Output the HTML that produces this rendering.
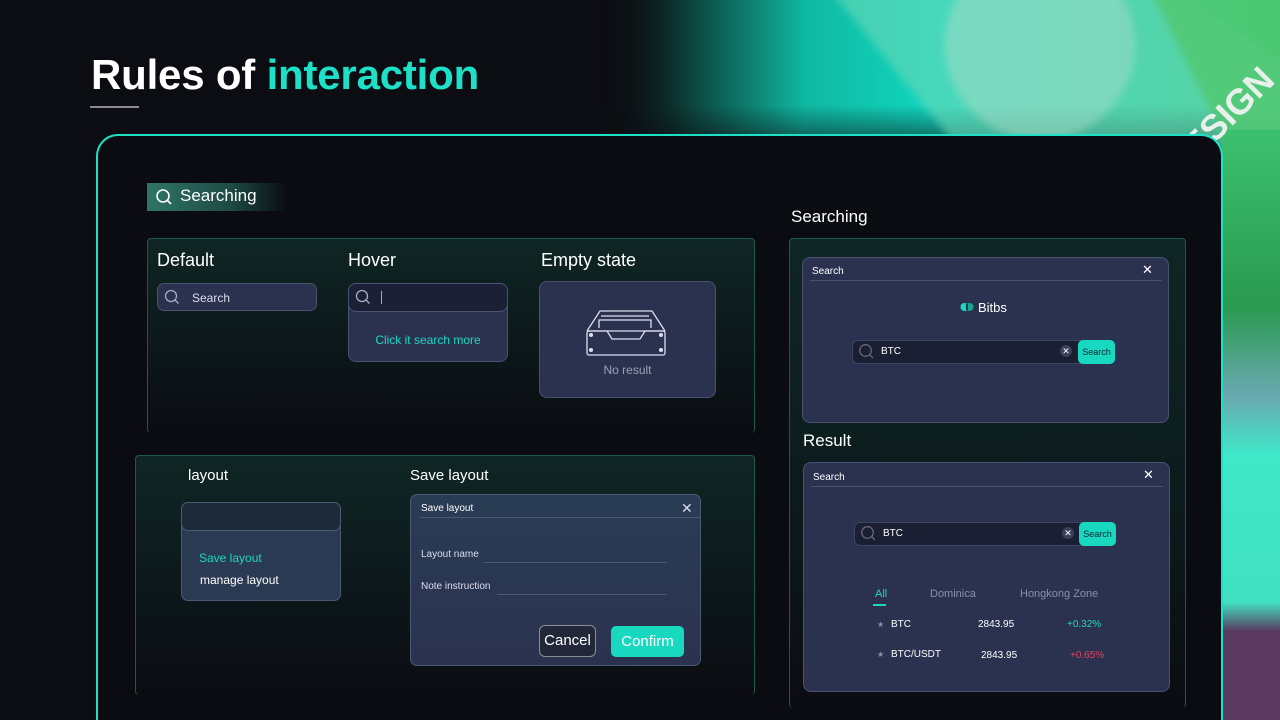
<!DOCTYPE html>
<html style="width:1280px;height:720px;overflow:hidden"><head><meta charset="utf-8"><style>
*{margin:0;padding:0;box-sizing:border-box}
body{width:1280px;height:720px;overflow:hidden;background:#0c0d12;font-family:"Liberation Sans",sans-serif;color:#fff;position:relative}
.a{position:absolute}
.t{white-space:nowrap}
.card{background:#2b3250;border:1px solid #4a5272;border-radius:8px}
.inp{background:#1a1f33;border:1px solid #3c4460;border-radius:6px}
</style></head><body>
<svg class="a" style="left:0;top:0" width="1280" height="720">
<defs>
<linearGradient id="g2" x1="0" y1="0" x2="1" y2="0"><stop offset="0" stop-color="#0c0d12" stop-opacity="0"/><stop offset="0.12" stop-color="#0c3a34"/><stop offset="0.3" stop-color="#0fb8a2"/><stop offset="0.5" stop-color="#12d8c0"/><stop offset="1" stop-color="#40c880"/></linearGradient>
<linearGradient id="gv" x1="0" y1="0" x2="0" y2="1"><stop offset="0.7" stop-color="#fff"/><stop offset="1" stop-color="#fff" stop-opacity="0.3"/></linearGradient>
<mask id="m"><rect x="600" y="0" width="680" height="150" fill="url(#gv)"/></mask>
<linearGradient id="g3" x1="0" y1="0" x2="0" y2="1"><stop offset="0" stop-color="#3cc070"/><stop offset="0.3" stop-color="#2a9a50"/><stop offset="0.45" stop-color="#6aa8b0"/><stop offset="0.55" stop-color="#40e8c8"/><stop offset="0.8" stop-color="#40e0c0"/><stop offset="0.85" stop-color="#5a3a60"/><stop offset="1" stop-color="#5a3a5e"/></linearGradient>
<filter id="b2"><feGaussianBlur stdDeviation="4"/></filter>
</defs>
<rect x="600" y="0" width="680" height="150" fill="url(#g2)" mask="url(#m)"/>
<g filter="url(#b2)">
<polygon points="830,-10 1180,-10 1290,70 1290,150 960,150" fill="#6ad8b8" opacity="0.6"/>
<circle cx="1040" cy="45" r="95" fill="#a8dcc8" opacity="0.5"/>
<polygon points="1150,-10 1290,-10 1290,150 1230,150" fill="#50c870" opacity="0.8"/>
</g>
<rect x="1222" y="130" width="58" height="590" fill="url(#g3)"/>
<text x="1150" y="150" font-family="Liberation Sans" font-weight="bold" font-size="36" fill="#e8f0ec" transform="rotate(-45 1200 130)">DESIGN</text>
</svg>
<div class="a t" style="left:91px;top:51px;font-size:42px;font-weight:bold;letter-spacing:-0.2px">Rules of <span style="color:#1de0c8">interaction</span></div>
<div class="a" style="left:90px;top:106px;width:49px;height:2px;background:#8a8a90"></div>
<div class="a" style="left:96px;top:134px;width:1127px;height:586px;border:2px solid #1de0c4;border-bottom:none;border-radius:22px 22px 0 0;background:#0b0c11"></div>

<div class="a" style="left:147px;top:183px;width:140px;height:28px;background:linear-gradient(90deg,#2f7468,#1e4a44 60%,rgba(12,13,18,0))"></div>
<svg class="a" style="left:155px;top:188px" width="18" height="18"><circle cx="8" cy="8" r="6" stroke="#fff" stroke-width="1.6" fill="none"/><line x1="12.5" y1="12.5" x2="16" y2="16" stroke="#fff" stroke-width="1.6"/></svg>
<div class="a t" style="left:180px;top:186px;font-size:17px">Searching</div>

<div class="a" style="left:147px;top:238px;width:608px;height:195px;border:1px solid #1e5a4c;border-bottom:none;border-radius:4px;background:linear-gradient(180deg,#0f2624,#0c1418 70%,#0b0c11)"></div>
<div class="a t" style="left:157px;top:250px;font-size:18px">Default</div>
<div class="a t" style="left:348px;top:250px;font-size:18px">Hover</div>
<div class="a t" style="left:541px;top:250px;font-size:18px">Empty state</div>
<div class="a card" style="left:157px;top:283px;width:160px;height:28px;border-radius:7px"></div>
<svg class="a" style="left:164px;top:289px" width="16" height="16"><circle cx="7" cy="7" r="5.5" stroke="#aab" stroke-width="1.3" fill="none"/><line x1="11" y1="11" x2="14.5" y2="14.5" stroke="#aab" stroke-width="1.3"/></svg>
<div class="a t" style="left:192px;top:291px;font-size:12px;color:#dde">Search</div>
<div class="a card" style="left:348px;top:283px;width:160px;height:79px"></div>
<div class="a" style="left:348px;top:283px;width:160px;height:29px;background:#1c2036;border:1px solid #4a5272;border-radius:8px"></div>
<svg class="a" style="left:355px;top:289px" width="16" height="16"><circle cx="7" cy="7" r="5.5" stroke="#aab" stroke-width="1.3" fill="none"/><line x1="11" y1="11" x2="14.5" y2="14.5" stroke="#aab" stroke-width="1.3"/></svg>
<div class="a" style="left:381px;top:291px;width:1px;height:13px;background:#aab"></div>
<div class="a t" style="left:348px;top:333px;width:160px;text-align:center;font-size:12px;color:#1dd8c0">Click it search more</div>
<div class="a card" style="left:539px;top:281px;width:177px;height:117px"></div>
<svg class="a" style="left:585px;top:308px" width="84" height="50" fill="none" stroke="#dde" stroke-width="1.3"><path d="M2 23 L15 3 L67 3 L80 23"/><rect x="2" y="23" width="78" height="24" rx="2"/><path d="M2 23 L22 23 L27 31 L55 31 L60 23 L80 23"/><path d="M14 20 L14 12 L66 12 L66 20 M16 8 L64 8"/><circle cx="6" cy="27" r="1.4" fill="#dde"/><circle cx="76" cy="27" r="1.4" fill="#dde"/><circle cx="6" cy="42" r="1.4" fill="#dde"/><circle cx="76" cy="42" r="1.4" fill="#dde"/></svg>
<div class="a t" style="left:539px;top:363px;width:177px;text-align:center;font-size:12px;color:#9aa0b4">No result</div>

<div class="a" style="left:135px;top:455px;width:620px;height:240px;border:1px solid #1e5a4c;border-bottom:none;border-radius:4px;background:linear-gradient(180deg,#0f2624,#0c1418 70%,#0b0c11)"></div>
<div class="a t" style="left:188px;top:467px;font-size:15px">layout</div>
<div class="a t" style="left:410px;top:467px;font-size:15px">Save layout</div>
<div class="a" style="left:181px;top:502px;width:160px;height:99px;background:#2a3a52;border:1px solid #4a5a72;border-radius:7px"></div>
<div class="a" style="left:181px;top:502px;width:160px;height:29px;background:#1c2a3a;border:1px solid #4a5a72;border-radius:7px"></div>
<div class="a t" style="left:199px;top:551px;font-size:12px;color:#1dd8c0">Save layout</div>
<div class="a t" style="left:200px;top:573px;font-size:12px">manage layout</div>
<div class="a" style="left:410px;top:494px;width:291px;height:172px;background:linear-gradient(180deg,#2a3c54,#2b3250);border:1px solid #4a5a72;border-radius:7px"></div>
<div class="a t" style="left:421px;top:503px;font-size:10px">Save layout</div>
<div class="a t" style="left:681px;top:500px;font-size:14px;color:#dde">✕</div>
<div class="a" style="left:420px;top:517px;width:281px;height:1px;background:#4a5a72"></div>
<div class="a t" style="left:421px;top:549px;font-size:10px;color:#dde">Layout name</div>
<div class="a" style="left:483px;top:562px;width:184px;height:1px;background:#4a5a72"></div>
<div class="a t" style="left:421px;top:581px;font-size:10px;color:#dde">Note instruction</div>
<div class="a" style="left:497px;top:594px;width:170px;height:1px;background:#4a5a72"></div>
<div class="a t" style="left:539px;top:625px;width:57px;height:32px;border:1px solid #8a8e98;border-radius:6px;background:#222838;font-size:15px;text-align:center;line-height:29px">Cancel</div>
<div class="a t" style="left:611px;top:626px;width:73px;height:31px;background:#18d8c0;border-radius:5px;font-size:15px;text-align:center;line-height:32px">Confirm</div>

<div class="a t" style="left:791px;top:207px;font-size:17px">Searching</div>
<div class="a" style="left:789px;top:238px;width:397px;height:470px;border:1px solid #1e5a4c;border-bottom:none;border-radius:4px;background:linear-gradient(180deg,#0f2624,#0c1a1c 60%,#0b0c11)"></div>
<div class="a card" style="left:802px;top:257px;width:367px;height:166px"></div>
<div class="a t" style="left:812px;top:266px;font-size:10px">Search</div>
<div class="a t" style="left:1142px;top:262px;font-size:13px">✕</div>
<div class="a" style="left:810px;top:280px;width:352px;height:1px;background:#4a5272"></div>
<svg class="a" style="left:960px;top:302px" width="14" height="10"><ellipse cx="4.5" cy="5" rx="4" ry="4" fill="#1dd8c0"/><ellipse cx="9.5" cy="5" rx="4" ry="4" fill="#14a890"/><rect x="6" y="2" width="2" height="6" fill="#2b3250"/></svg>
<div class="a t" style="left:978px;top:300px;font-size:13px">Bitbs</div>
<div class="a inp" style="left:852px;top:340px;width:262px;height:24px"></div>
<svg class="a" style="left:858px;top:343px" width="17" height="17"><circle cx="7.5" cy="7.5" r="5.8" stroke="#667" stroke-width="1.3" fill="none"/><line x1="11.5" y1="11.5" x2="15" y2="15" stroke="#667" stroke-width="1.3"/></svg>
<div class="a t" style="left:881px;top:346px;font-size:10px">BTC</div>
<div class="a t" style="left:1060px;top:345px;width:12px;height:12px;border-radius:6px;background:#3a4058;font-size:9px;text-align:center;line-height:12px">✕</div>
<div class="a t" style="left:1078px;top:340px;width:37px;height:24px;background:#18d8c0;border-radius:5px;font-size:9px;color:#123;text-align:center;line-height:24px">Search</div>

<div class="a t" style="left:803px;top:431px;font-size:17px">Result</div>
<div class="a card" style="left:803px;top:462px;width:367px;height:230px"></div>
<div class="a t" style="left:813px;top:472px;font-size:10px">Search</div>
<div class="a t" style="left:1143px;top:467px;font-size:13px">✕</div>
<div class="a" style="left:811px;top:486px;width:352px;height:1px;background:#4a5272"></div>
<div class="a inp" style="left:854px;top:522px;width:262px;height:24px"></div>
<svg class="a" style="left:860px;top:525px" width="17" height="17"><circle cx="7.5" cy="7.5" r="5.8" stroke="#667" stroke-width="1.3" fill="none"/><line x1="11.5" y1="11.5" x2="15" y2="15" stroke="#667" stroke-width="1.3"/></svg>
<div class="a t" style="left:883px;top:528px;font-size:10px">BTC</div>
<div class="a t" style="left:1062px;top:527px;width:12px;height:12px;border-radius:6px;background:#3a4058;font-size:9px;text-align:center;line-height:12px">✕</div>
<div class="a t" style="left:1079px;top:522px;width:37px;height:24px;background:#18d8c0;border-radius:5px;font-size:9px;color:#123;text-align:center;line-height:24px">Search</div>
<div class="a t" style="left:875px;top:588px;font-size:11px;color:#1dd8c0">All</div>
<div class="a" style="left:873px;top:604px;width:13px;height:2px;background:#1dd8c0"></div>
<div class="a t" style="left:930px;top:588px;font-size:11px;color:#8a90a8">Dominica</div>
<div class="a t" style="left:1020px;top:588px;font-size:11px;color:#8a90a8">Hongkong Zone</div>
<div class="a t" style="left:877px;top:620px;font-size:8px;color:#8a90a8">★</div>
<div class="a t" style="left:891px;top:619px;font-size:10px">BTC</div>
<div class="a t" style="left:978px;top:619px;font-size:10px">2843.95</div>
<div class="a t" style="left:1067px;top:619px;font-size:10px;color:#1dd8c0">+0.32%</div>
<div class="a t" style="left:877px;top:650px;font-size:8px;color:#8a90a8">★</div>
<div class="a t" style="left:891px;top:649px;font-size:10px">BTC/USDT</div>
<div class="a t" style="left:981px;top:650px;font-size:10px">2843.95</div>
<div class="a t" style="left:1070px;top:650px;font-size:10px;color:#e8405a">+0.65%</div>
</body></html>
